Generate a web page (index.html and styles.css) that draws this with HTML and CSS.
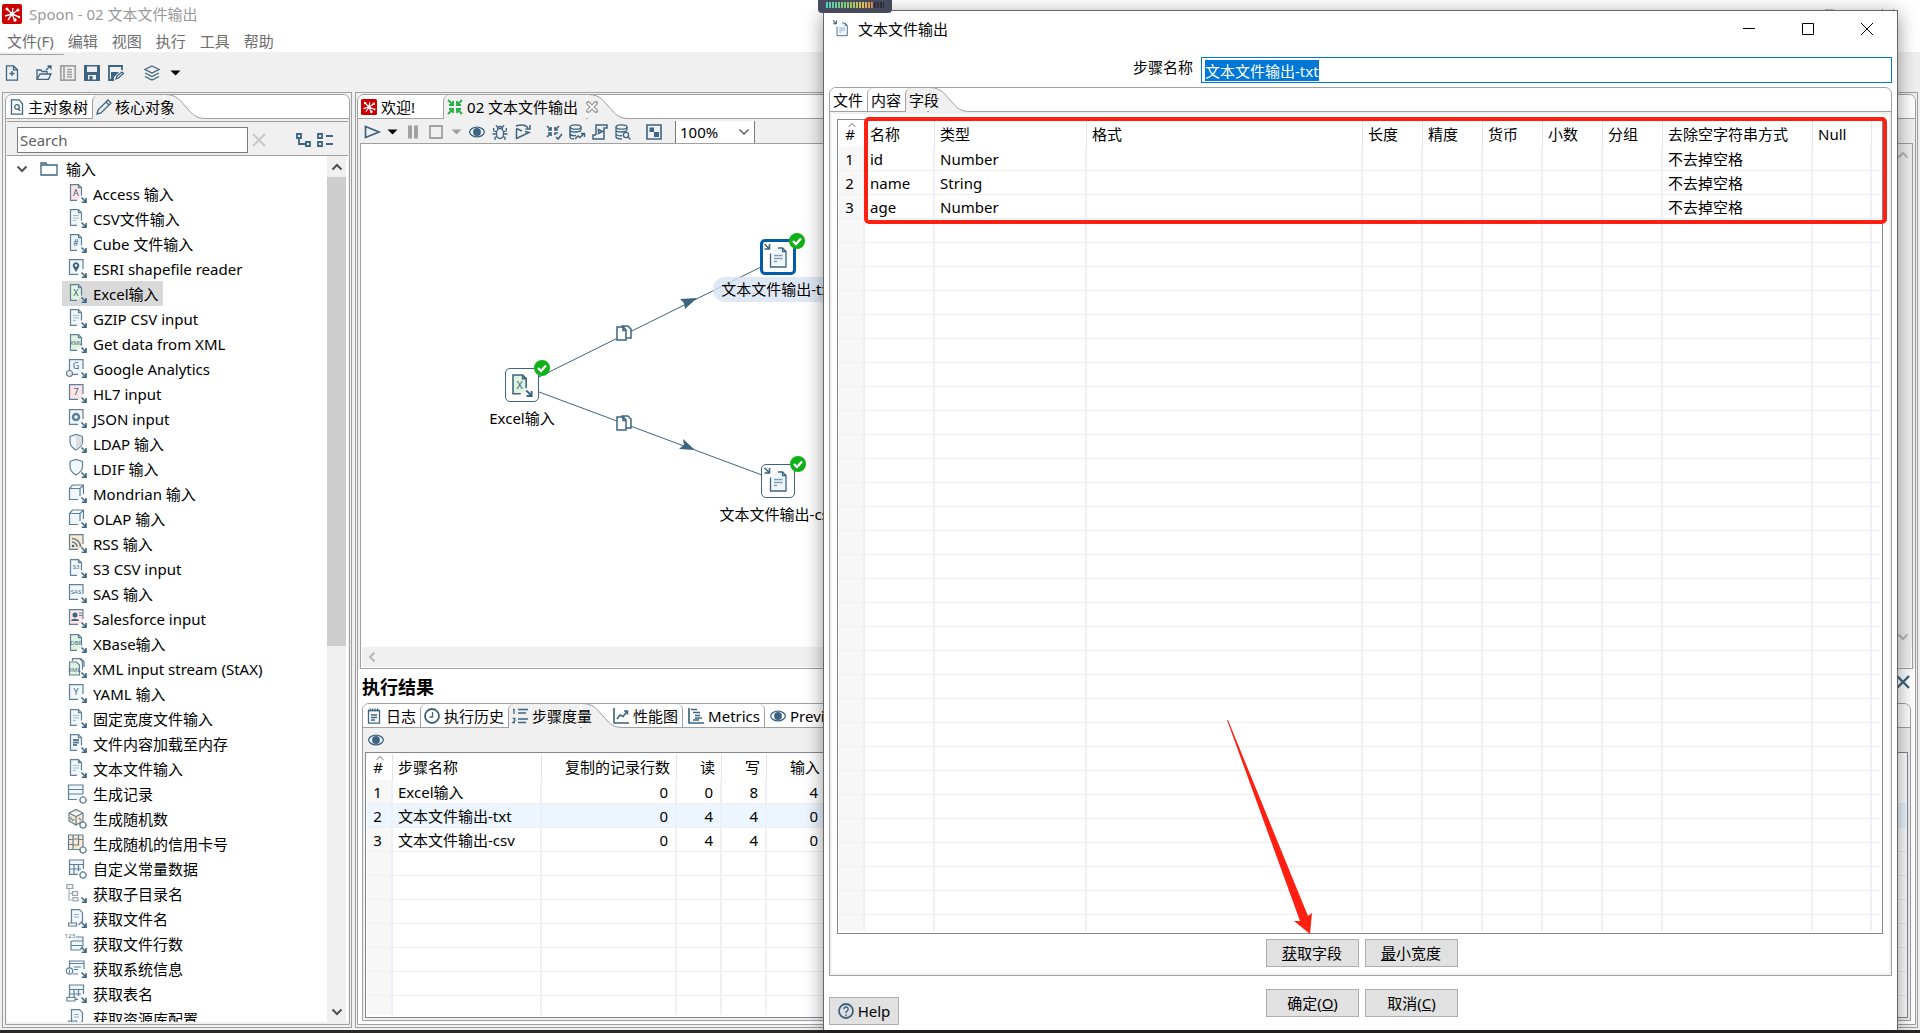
FILE: index.html
```html
<!DOCTYPE html>
<html lang="zh-CN">
<head>
<meta charset="utf-8">
<title>Spoon - 02 文本文件输出</title>
<link rel="stylesheet" href="styles.css">
</head>
<body>
<svg class="sprite" aria-hidden="true">
  <defs>
    <symbol id="logo" viewBox="0 0 20 20"><rect width="20" height="20" rx="2" fill="#c00" stroke="none"/><g stroke="#fff" stroke-width="1.4" fill="none"><path d="M10 10L5 5M10 10L16 6M10 10L3 12M10 10L6 16M10 10L13 17M10 10L17 13M10 10L11 4"/></g><g fill="#fff" stroke="none"><circle cx="10" cy="10" r="2"/><circle cx="5" cy="5" r="1.5"/><circle cx="16" cy="6" r="1.5"/><circle cx="13" cy="16" r="1.7"/><circle cx="17" cy="13" r="1.200"/></g></symbol>
    <symbol id="new" viewBox="0 0 16 16"><path d="M2.500.8h7l4 4v10.400h-11z M9.500.8v4h4 M8 6v5 M5.500 8.500h5"/></symbol>
    <symbol id="open" viewBox="0 0 16 16"><path d="M1 14V5h4l1 1.500h5V9M1 14.300h11.500L15 9H4z M10 5l4.500-4 M11.500 1H15v3.500"/></symbol>
    <symbol id="explore" viewBox="0 0 16 16"><path d="M.8.8h14.400v14.400H.8z M4 1v14 M7 4.500h5 M7 7h5 M7 9.500h5 M7 12h5" stroke-width="1.700"/></symbol>
    <symbol id="save" viewBox="0 0 16 16"><path class="solid" fill-rule="evenodd" d="M0 0h16v16H0zM3 1.500V7h10V1.500zM4 10v4.500h8V10z"/><path class="solid" d="M5.500 11h3v4h-3z"/></symbol>
    <symbol id="saveas" viewBox="0 0 16 16"><path d="M14 5V1H1v14h5" stroke-width="1.800"/><path class="solid" d="M3 7h8l-5 5H3zM3 12h3v3H3z"/><path d="M8 14l1-3 5-4 1.500 1.500-5 4.500z"/></symbol>
    <symbol id="layers" viewBox="0 0 16 16"><path d="M8 1l7 3.500L8 8 1 4.500z M1 8l7 3.500L15 8 M1 11.500L8 15l7-3.500"/></symbol>
    <symbol id="caret" viewBox="0 0 10 6"><path class="fillcur" d="M0 .5h10L5 5.500z"/></symbol>
    <symbol id="docsearch" viewBox="0 0 16 16"><path d="M2.500.8h7.500l3.500 4v10.400h-11z"/><circle cx="8" cy="8" r="2.300"/><path d="M9.500 10l1.500 2"/></symbol>
    <symbol id="pencil" viewBox="0 0 16 16"><path d="M1 15l1-4L12 1l3 3L5 14z M10 3l3 3"/></symbol>
    <symbol id="cross" viewBox="0 0 16 16"><path d="M2 2l12 12M14 2L2 14"/></symbol>
    <symbol id="expand" viewBox="0 0 16 16"><path d="M2 2h4v4H2zM11 10h4v4h-4zM4 6v6h7" stroke-width="1.800"/></symbol>
    <symbol id="collapse" viewBox="0 0 16 16"><path d="M1 2h4v4H1zM1 10h4v4H1zM9 4h7M9 12h7" stroke-width="1.800"/></symbol>
    <symbol id="folder" viewBox="0 0 18 16"><path d="M1 14V2h5l1 2h10v10z M1 4h7"/></symbol>
    <symbol id="up" viewBox="0 0 12 8"><path d="M1.500 6.500L6 2l4.500 4.500"/></symbol>
    <symbol id="down" viewBox="0 0 12 8"><path d="M1.500 1.500L6 6l4.500-4.500"/></symbol>
    <symbol id="left" viewBox="0 0 8 12"><path d="M6.500 1.500L2 6l4.500 4.500"/></symbol>
    <symbol id="run" viewBox="0 0 16 16"><path d="M1.500 2.500v11L15 8z" stroke-width="1.700"/></symbol>
    <symbol id="pause" viewBox="0 0 16 16"><path class="fillcur" d="M3 1.500h4v13H3zM9 1.500h4v13H9z"/></symbol>
    <symbol id="stop" viewBox="0 0 16 16"><path d="M2 2h12v12H2z" stroke-width="1.800"/></symbol>
    <symbol id="eye" viewBox="0 0 16 16"><ellipse cx="8" cy="8" rx="7.300" ry="4.800"/><circle class="solid" cx="8" cy="8" r="3.900"/></symbol>
    <symbol id="bug" viewBox="0 0 16 16"><ellipse cx="8" cy="9.500" rx="3.500" ry="5"/><path d="M5.500 5a2.500 2.500 0 0 1 5 0M5.500 3.500L4 1M10.500 3.500L12 1M4.500 8L2 7 1.500 4M11.500 8L14 7l.5-3M4.500 10H.5M11.500 10h4M5 12.500l-2 1V16M11 12.500l2 1V16"/></symbol>
    <symbol id="replay" viewBox="0 0 16 16"><path d="M1.500 4.500v10L14 8.500l-4-1M1.500 4.500L7 7M1 2c6-2 10-1 12 2M15 1v4h-4.500" stroke-width="1.500"/></symbol>
    <symbol id="inward" viewBox="0 0 16 16"><path d="M1 1l5 5M15 1l-5 5M1 15l5-5M15 15l-5-5M2 6h4V2M10 2v4h4M2 10h4v4M10 14v-4h4" stroke-width="1.900"/></symbol>
    <symbol id="verify" viewBox="0 0 16 16"><path d="M1 2l4 4M13 2L9 6M1 13l4-4M2 6h3V3M9 3v3h3M2 9h3v3M9 11V9h3M10 13l2 2 4-5" stroke-width="1.700"/></symbol>
    <symbol id="impact" viewBox="0 0 16 16"><ellipse cx="6.500" cy="3" rx="5.500" ry="2.200"/><path d="M1 3v10c0 1 2 2 4 2M12 3v3M1 6.500c1 2 9 2 11 0M1 10c1 1.500 4 2 6 1.500M6 15l3-3 2 1.500 4-4M12 9.500h3.500V13" stroke-width="1.500"/></symbol>
    <symbol id="sql" viewBox="0 0 16 16"><path d="M4 11V1h11v3h-3v11H1v-4h3M6.500 5.500v4l4-2z" stroke-width="1.500"/></symbol>
    <symbol id="dbexplore" viewBox="0 0 16 16"><ellipse cx="6.500" cy="3" rx="5.500" ry="2.200"/><path d="M1 3v10c0 1 3 2 6 2M12 3v3M1 6.500c1 2 9 2 11 0M1 10c1 1.500 4 2 6 1.500M13 13l2.500 2.500"/><circle cx="11" cy="11" r="2.600"/></symbol>
    <symbol id="grid" viewBox="0 0 16 16"><path d="M1 1h14v14H1z" stroke-width="1.600"/><path class="solid" d="M3.500 3.500h4.500v4.500H3.500zM8 8h5v5H8z"/></symbol>
    <symbol id="tabx" viewBox="0 0 14 14"><path d="M1 1h3l3 3.500L10 1h3v3L9.500 7l3.500 3v3h-3L7 9.500 4 13H1v-3l3.500-3L1 4z" stroke-width="1"/></symbol>
    <symbol id="log" viewBox="0 0 16 16"><path d="M2.500 2.500h11v12.700h-11zM4 .5v3M6.500.5v3M9 .5v3M11.500.5v3M5 7h6M5 9.500h6M5 12h4"/></symbol>
    <symbol id="clock" viewBox="0 0 16 16"><circle cx="8" cy="8" r="7" stroke-width="1.800"/><path d="M8.500 4v5H5.500"/></symbol>
    <symbol id="steps" viewBox="0 0 16 16"><path d="M1 1.500h1V6M.8 10.500h2v2l-1.800 2h2M6 1.500h10M6 5h8M6 11h10M6 14.500h8"/></symbol>
    <symbol id="chart" viewBox="0 0 16 16"><path d="M1 0v15h15M4 11l3-4 3 1.500 4-5M11 3h3.500v3.500" stroke-width="1.600"/></symbol>
    <symbol id="metrics" viewBox="0 0 16 16"><path d="M1 0v15h15M3 1.500h6M5 4.500h7M7 7.500h5M7 10h7M5 12h6" stroke-width="1.700"/></symbol>
    <symbol id="help" viewBox="0 0 16 16"><circle cx="8" cy="8" r="7" stroke-width="1.800"/><path d="M5.800 6.200a2.200 2.200 0 1 1 3.200 2c-.8.500-1 .8-1 1.800M8 11.200v1.500" stroke-width="1.500"/></symbol>
    <symbol id="arr" viewBox="0 0 21 21"><path d="M15.500 14.500l4 4M20 15v4.200h-4.200" stroke="#3d6480" stroke-width="1.600"/></symbol>
    <symbol id="gear" viewBox="0 0 21 21"><circle cx="17" cy="17" r="3" fill="#fff"/><path d="M17 13v1M17 20v1M13 17h1M20 17h1"/></symbol>
    <symbol id="doc" viewBox="0 0 21 21"><path class="tint bare" d="M4.500 1.700h8l3 3V13l-4 4h-7z"/><path d="M15.500 12.500V4.700l-3-3h-8v15.600h6.500M12.500 1.700v3h3"/></symbol>
    <symbol id="box" viewBox="0 0 21 21"><path class="tint bare" d="M3.500 1.700h13.500V13l-4 4H3.500z"/><path d="M17 11V1.700H3.500v14.600H12"/></symbol>
    <symbol id="lines" viewBox="0 0 21 21"><path d="M7 7.500h6M7 10h6M7 12.500h3" opacity=".5"/></symbol>
    <symbol id="boldlines" viewBox="0 0 21 21"><path d="M7 7h6M7 9.500h6M7 12h4" stroke-width="2"/></symbol>
    <symbol id="shield" viewBox="0 0 21 21"><path class="tint" d="M4 3.500l6-2 6.500 2v5c0 4-3 6.500-6.500 8.500C6.500 15 4 12.500 4 8.500z"/></symbol>
    <symbol id="cube" viewBox="0 0 21 21"><path class="tint bare" d="M3.500 5.500l3-3.500h11v9l-4 5.500h-10z"/><path d="M17.500 11V2h-11l-3 3.500v11H12M3.500 5.500h10.500V13M14 5.500L17.500 2"/></symbol>
    <symbol id="tables" viewBox="0 0 21 21"><path class="tint bare" d="M3.500 2h14v9l-4 5h-10z"/><path d="M17.500 11V2h-14v14.300H12M3.500 6.500h14M8 6.500V16M12.500 6.500V13M3.500 11H15"/></symbol>
    <symbol id="outfile" viewBox="0 0 24 24"><path class="tint bare" d="M4.500 7.500V22H20V6.500L16.500 3h-6z"/><path d="M4.500 8.500V22H20V6.500h-3.500V3H12M16.500 3L20 6.500"/><path d="M8 10.500h8.500M8 13.500h8.500M8 16.500h3" opacity=".6"/><path d="M-1.500-1l4.500 4.500M3.500-1v5h-5" stroke-width="1.600"/></symbol>
    <symbol id="copies" viewBox="0 0 16 16"><path fill="#fff" stroke-width="1.500" d="M6 1h6l3 3v9H6z"/><path fill="#fff" stroke-width="1.500" d="M1 2h6.500L10 5v10H1z M7 2v3.500h3"/></symbol>
    <symbol id="ok" viewBox="0 0 16 16"><circle cx="8" cy="8" r="8" fill="#10b018" stroke="none"/><path d="M4 8l3 3 5-5.500" stroke="#fff" stroke-width="2.400"/></symbol>
    <symbol id="swoosh" viewBox="0 0 40 24"><path fill="#f0f0f0" stroke="none" d="M0 0C13 0 16 7 21 12s8 11 19 11v1H0z"/><path stroke="#a0a0a0" stroke-width="1" d="M0-.5C13-.5 16 7 21 12s8 11.500 19 11.500"/></symbol>
  </defs>
</svg>

<div class="app">
  <header class="titlebar">
    <svg class="i20"><use href="#logo"/></svg>
    <h1>Spoon - 02 文本文件输出</h1>
    <svg class="wincontrols" viewBox="0 0 72 14"><path d="M3 11V3h9v9M1 14V5h9v9M60 2l12 12M72 2L60 14"/></svg>
  </header>
  <nav class="menubar">
    <button>文件(F)</button><button>编辑</button><button>视图</button><button>执行</button><button>工具</button><button>帮助</button>
  </nav>
  <div class="toolbar">
    <button class="tool" aria-label="新建"><svg class="i16"><use href="#new"/></svg></button>
    <button class="tool gap-s" aria-label="打开"><svg class="i16"><use href="#open"/></svg></button>
    <button class="tool off" aria-label="浏览"><svg class="i16"><use href="#explore"/></svg></button>
    <button class="tool" aria-label="保存"><svg class="i16"><use href="#save"/></svg></button>
    <button class="tool" aria-label="另存为"><svg class="i16"><use href="#saveas"/></svg></button>
    <button class="tool gap-m" aria-label="视图"><svg class="i16"><use href="#layers"/></svg></button>
    <button class="tool black more" aria-label="更多"><svg class="icaret"><use href="#caret"/></svg></button>
  </div>

  <div class="workspace">
    <aside class="pane side"><div class="folder">
      <div class="tabs">
        <button class="tab"><svg class="i16"><use href="#docsearch"/></svg>主对象树</button>
        <button class="tab active"><svg class="i16"><use href="#pencil"/></svg>核心对象</button>
        <svg class="swoosh"><use href="#swoosh"/></svg>
      </div>
      <div class="sidebody">
        <div class="searchrow">
          <input type="text" class="search" placeholder="Search" aria-label="Search">
          <button class="tool faint" aria-label="清除"><svg class="i16"><use href="#cross"/></svg></button>
          <span class="spacer"></span>
          <button class="tool" aria-label="展开"><svg class="i16"><use href="#expand"/></svg></button>
          <button class="tool" aria-label="折叠"><svg class="i16"><use href="#collapse"/></svg></button>
        </div>
        <div class="treebox">
          <ul class="tree">
            <li class="root"><svg class="ichev"><use href="#down"/></svg><svg class="ifolder"><use href="#folder"/></svg>输入</li>
            <li><svg class="pink"><use href="#doc"/><text x="10" y="13">A</text><use href="#arr"/></svg>Access 输入</li>
            <li><svg><use href="#doc"/><use href="#lines"/><use href="#arr"/></svg>CSV文件输入</li>
            <li><svg><use href="#doc"/><text x="10" y="13">#</text><use href="#arr"/></svg>Cube 文件输入</li>
            <li><svg><use href="#box"/><path class="solid" d="M10 14L7 9a3.300 3.300 0 1 1 6 0z"/><circle cx="10" cy="7.500" r="1.200" fill="#fff" stroke="none"/><use href="#arr"/></svg>ESRI shapefile reader</li>
            <li class="selected"><svg class="green"><use href="#doc"/><text x="10" y="13">X</text><use href="#arr"/></svg>Excel输入</li>
            <li><svg><use href="#doc"/><use href="#lines"/><use href="#arr"/></svg>GZIP CSV input</li>
            <li><svg class="green"><use href="#doc"/><text class="tiny" x="10" y="12">XML</text><use href="#arr"/></svg>Get data from XML</li>
            <li><svg><use href="#box"/><text x="10" y="11">G</text><circle cx="3.500" cy="15.500" r="3" fill="#fde3e3"/><use href="#arr"/></svg>Google Analytics</li>
            <li><svg class="pink"><use href="#box"/><text x="10" y="12">7</text><use href="#arr"/></svg>HL7 input</li>
            <li><svg><use href="#box"/><circle cx="10" cy="9" r="3" stroke-width="2.500"/><use href="#arr"/></svg>JSON input</li>
            <li><svg><use href="#shield"/><path d="M10 2l6 2v5c0 3-3 6-6 7z" fill="#ddd" stroke="none"/><use href="#arr"/></svg>LDAP 输入</li>
            <li><svg><use href="#shield"/><use href="#arr"/></svg>LDIF 输入</li>
            <li><svg><use href="#cube"/><use href="#arr"/></svg>Mondrian 输入</li>
            <li><svg><use href="#cube"/><use href="#arr"/></svg>OLAP 输入</li>
            <li><svg class="orange"><use href="#box"/><path d="M6 9a5 5 0 0 1 5 5M6 5.500A8.500 8.500 0 0 1 14.500 14" stroke-width="1.600"/><circle class="solid" cx="7" cy="13" r="1.300"/><use href="#arr"/></svg>RSS 输入</li>
            <li><svg><use href="#doc"/><text class="tiny" x="10" y="11">S3</text><use href="#arr"/></svg>S3 CSV input</li>
            <li><svg><use href="#box"/><text class="tiny" x="10" y="11">SAS</text><use href="#arr"/></svg>SAS 输入</li>
            <li><svg class="pink"><use href="#box"/><circle class="solid" cx="9" cy="7" r="2.500"/><path class="solid" d="M5 13c0-3 8-3 8 0z"/><path d="M13 5h3M13 7.500h3"/><use href="#arr"/></svg>Salesforce input</li>
            <li><svg class="green"><use href="#doc"/><text class="tiny" x="10" y="12">DBF</text><use href="#arr"/></svg>XBase输入</li>
            <li><svg class="green"><path d="M6.500 3V.7h7l3 3v8M9 .7h6l3 3V9"/><path class="tint" d="M3.500 4h7l3 3v10h-10z"/><text class="tiny" x="8.500" y="14">XML</text><use href="#arr"/></svg>XML input stream (StAX)</li>
            <li><svg><use href="#box"/><text x="10" y="12">Y</text><use href="#arr"/></svg>YAML 输入</li>
            <li><svg><use href="#doc"/><use href="#lines"/><use href="#arr"/></svg>固定宽度文件输入</li>
            <li><svg><use href="#doc"/><use href="#boldlines"/><use href="#arr"/></svg>文件内容加载至内存</li>
            <li><svg><use href="#doc"/><use href="#lines"/><use href="#arr"/></svg>文本文件输入</li>
            <li><svg><path class="tint bare" d="M2.500 2h14.500v9l-5 5.500H2.500z"/><path d="M17 11V2H2.500v14.500H11M2.500 6.500H17M2.500 11H17"/><use href="#gear"/></svg>生成记录</li>
            <li><svg class="orange"><path class="tint" d="M3 5l7-3.500L17 5v8l-7 4-7-4zM3 5l7 3.500L17 5M10 8.500V17"/><path d="M5 9v3M8 11l-2 2M13 10l2 2" /><use href="#gear"/></svg>生成随机数</li>
            <li><svg class="orange"><path class="tint" d="M2.500 2H17v14.500H2.500zM7 2v4M12.500 2v4M2.500 6.500H7M12.500 6.500H17M2.500 11.500H7M7 6h5.500v6H7zM7 12v4.500"/><use href="#gear"/></svg>生成随机的信用卡号</li>
            <li><svg><use href="#tables"/><use href="#gear"/></svg>自定义常量数据</li>
            <li><svg class="orange"><path class="tint" d="M.8 1.500h6v4h-6zM6.500 8.500h5v4h-5zM7 14.500h5v3.500H7z" opacity=".7"/><path d="M3 6v11h3M3 10.500h3" opacity=".6"/><use href="#arr"/></svg>获取子目录名</li>
            <li><svg><path class="tint" d="M5.500 15V1.700h8l3 3V13l-4 4M2.500 15h8v3h-8z"/><path d="M8 6.500h5M8 9h5" opacity=".6"/><use href="#arr"/></svg>获取文件名</li>
            <li><svg><text class="tiny" x="4" y="5">123</text><path class="tint" d="M10 4h7v9l-3 4H5V8M5 8h12M5 12.500h11"/><use href="#arr"/></svg>获取文件行数</li>
            <li><svg><path class="tint bare" d="M3.500 3H18v8l-5 5H3.500z"/><path d="M3.500 12V3H18v8M3.500 5.500H18M8 9h7M8 11.500h4M7 16h5"/><circle cx="3.500" cy="13" r="3.200" fill="#fff"/><path d="M3.500 11.500v3.500"/><use href="#arr"/></svg>获取系统信息</li>
            <li><svg><use href="#tables"/><path d="M1 14.500h8v3.500H1z" fill="#fff"/><use href="#arr"/></svg>获取表名</li>
            <li><svg><path class="tint" d="M5.500 15V1.700h8l3 3V13l-4 4M2.500 13h8v3h-8z"/><path d="M8 6.500h5M8 9h5" opacity=".6"/><use href="#arr"/></svg>获取资源库配置</li>
          </ul>
          <div class="vscroll"><svg class="ichev"><use href="#up"/></svg><div class="thumb"></div><svg class="ichev"><use href="#down"/></svg></div>
        </div>
      </div>
    </div></aside>

    <main class="pane editor"><div class="folder">
      <div class="tabs">
        <button class="tab wide"><svg class="i16"><use href="#logo"/></svg>欢迎!</button>
        <button class="tab active"><svg class="i16 lime"><use href="#inward"/></svg>02 文本文件输出<svg class="itabx"><use href="#tabx"/></svg></button>
        <svg class="swoosh"><use href="#swoosh"/></svg>
      </div>
      <div class="runbar">
        <button class="tool" aria-label="运行"><svg class="i16"><use href="#run"/></svg></button>
        <button class="tool black" aria-label="运行选项"><svg class="icaret"><use href="#caret"/></svg></button>
        <button class="tool off" aria-label="暂停"><svg class="i16"><use href="#pause"/></svg></button>
        <button class="tool off" aria-label="停止"><svg class="i16"><use href="#stop"/></svg></button>
        <button class="tool off" aria-label="停止选项"><svg class="icaret"><use href="#caret"/></svg></button>
        <button class="tool" aria-label="预览"><svg class="i16"><use href="#eye"/></svg></button>
        <button class="tool" aria-label="调试"><svg class="i16"><use href="#bug"/></svg></button>
        <button class="tool" aria-label="重放"><svg class="i16"><use href="#replay"/></svg></button>
        <button class="tool gap-s" aria-label="校验"><svg class="i16"><use href="#verify"/></svg></button>
        <button class="tool" aria-label="影响分析"><svg class="i16"><use href="#impact"/></svg></button>
        <button class="tool" aria-label="SQL"><svg class="i16"><use href="#sql"/></svg></button>
        <button class="tool" aria-label="浏览数据库"><svg class="i16"><use href="#dbexplore"/></svg></button>
        <button class="tool gap-s" aria-label="显示结果"><svg class="i16"><use href="#grid"/></svg></button>
        <span class="zoombox"><select aria-label="缩放"><option>100%</option></select><svg class="ichev"><use href="#down"/></svg></span>
      </div>
      <div class="canvasframe">
        <div class="canvas">
          <svg class="hops" viewBox="0 0 480 400">
            <path d="M178 233L400 123M178 248L401 331"/>
            <path class="solid" d="M319 155l17-1-12 11-1-6zM322 295l12 11-16-1 5-4z"/>
            <use href="#copies" x="255" y="181" width="16" height="16"/>
            <use href="#copies" x="255" y="271" width="16" height="16"/>
          </svg>
          <div class="node excel"><span class="iconbox"><svg class="green" viewBox="2 0 20 20"><use href="#doc" width="21" height="21"/><text x="10" y="13">X</text><use href="#arr" width="21" height="21"/></svg><svg class="ok"><use href="#ok"/></svg></span><span class="label">Excel输入</span></div>
          <div class="node txt current"><span class="iconbox"><svg><use href="#outfile"/></svg><svg class="ok"><use href="#ok"/></svg></span><span class="label">文本文件输出-txt</span></div>
          <div class="node csv"><span class="iconbox"><svg><use href="#outfile"/></svg><svg class="ok"><use href="#ok"/></svg></span><span class="label">文本文件输出-csv</span></div>
        </div>
        <div class="vscroll pale"><svg class="ichev"><use href="#up"/></svg><svg class="ichev"><use href="#down"/></svg></div>
        <div class="hscroll"><svg class="ileft"><use href="#left"/></svg></div>
      </div>
      <section class="results">
        <div class="resulthead"><h2>执行结果</h2><button class="tool" aria-label="关闭"><svg class="i16 thick"><use href="#cross"/></svg></button></div>
        <div class="folder">
          <div class="tabs">
            <button class="tab"><svg class="i16"><use href="#log"/></svg>日志</button>
            <button class="tab"><svg class="i16"><use href="#clock"/></svg>执行历史</button>
            <button class="tab active"><svg class="i16"><use href="#steps"/></svg>步骤度量</button>
            <svg class="swoosh"><use href="#swoosh"/></svg>
            <button class="tab after first"><svg class="i16"><use href="#chart"/></svg>性能图</button>
            <button class="tab after"><svg class="i16"><use href="#metrics"/></svg>Metrics</button>
            <button class="tab after"><svg class="i16"><use href="#eye"/></svg>Preview data</button>
          </div>
          <div class="resultbody">
            <div class="minibar"><button class="tool" aria-label="预览"><svg class="i16"><use href="#eye"/></svg></button></div>
            <div class="gridbox">
              <table class="grid metrics">
                <colgroup><col class="w26"><col class="w149"><col class="w135"><col class="w45"><col class="w45"><col class="w60"><col></colgroup>
                <thead><tr><th><svg class="isort"><use href="#up"/></svg>#</th><th>步骤名称</th><th class="n">复制的记录行数</th><th class="n">读</th><th class="n">写</th><th class="n">输入</th><th></th></tr></thead>
                <tbody>
                  <tr><td>1</td><td>Excel输入</td><td class="n">0</td><td class="n">0</td><td class="n">8</td><td class="n">4</td><td></td></tr>
                  <tr class="alt"><td>2</td><td>文本文件输出-txt</td><td class="n">0</td><td class="n">4</td><td class="n">4</td><td class="n">0</td><td></td></tr>
                  <tr><td>3</td><td>文本文件输出-csv</td><td class="n">0</td><td class="n">4</td><td class="n">4</td><td class="n">0</td><td></td></tr>
                  <tr class="rest"><td></td><td></td><td></td><td></td><td></td><td></td><td></td></tr>
                </tbody>
              </table>
            </div>
          </div>
        </div>
      </section>
    </div></main>
  </div>
  <div class="desktopedge"></div>
</div>

<div class="dialog" role="dialog" aria-labelledby="dlgtitle">
  <div class="dlghead">
    <svg class="i16"><use href="#outfile"/></svg>
    <h2 id="dlgtitle">文本文件输出</h2>
    <span class="spacer"></span>
    <button class="tool black" aria-label="最小化"><svg class="iwin" viewBox="0 0 12 12"><path d="M0 5.500h12"/></svg></button>
    <button class="tool black" aria-label="最大化"><svg class="iwin" viewBox="0 0 12 12"><path d="M.5.500h11v11H.5z"/></svg></button>
    <button class="tool black" aria-label="关闭"><svg class="iwin" viewBox="0 0 12 12"><path d="M0 0l12 12M12 0L0 12"/></svg></button>
  </div>
  <div class="namerow">
    <label for="stepname">步骤名称</label>
    <input id="stepname" type="text" value="文本文件输出-txt">
  </div>
  <div class="folder">
    <div class="tabs">
      <button class="tab">文件</button>
      <button class="tab">内容</button>
      <button class="tab active">字段</button>
      <svg class="swoosh"><use href="#swoosh"/></svg>
    </div>
    <div class="dlgbody">
      <div class="gridbox">
        <table class="grid fields">
          <colgroup><col class="w26"><col class="w70"><col class="w152"><col class="w276"><col class="w60"><col class="w60"><col class="w60"><col class="w60"><col class="w60"><col class="w150"><col class="w59"><col></colgroup>
          <thead><tr><th><svg class="isort"><use href="#up"/></svg>#</th><th>名称</th><th>类型</th><th>格式</th><th>长度</th><th>精度</th><th>货币</th><th>小数</th><th>分组</th><th>去除空字符串方式</th><th>Null</th><th></th></tr></thead>
          <tbody>
            <tr><td>1</td><td>id</td><td>Number</td><td></td><td></td><td></td><td></td><td></td><td></td><td>不去掉空格</td><td></td><td></td></tr>
            <tr><td>2</td><td>name</td><td>String</td><td></td><td></td><td></td><td></td><td></td><td></td><td>不去掉空格</td><td></td><td></td></tr>
            <tr><td>3</td><td>age</td><td>Number</td><td></td><td></td><td></td><td></td><td></td><td></td><td>不去掉空格</td><td></td><td></td></tr>
            <tr class="rest"><td></td><td></td><td></td><td></td><td></td><td></td><td></td><td></td><td></td><td></td><td></td><td></td></tr>
          </tbody>
        </table>
      </div>
      <div class="btnrow"><button class="btn"><u>获</u>取字段</button><button class="btn"><u>最</u>小宽度</button></div>
    </div>
  </div>
  <div class="dlgfoot">
    <button class="btn help"><svg class="i16"><use href="#help"/></svg>Help</button>
    <div class="btnrow"><button class="btn">确定(<u>O</u>)</button><button class="btn">取消(<u>C</u>)</button></div>
  </div>
  <div class="markbox"></div>
  <svg class="markarrow" viewBox="0 0 86 214"><path d="M0 0h1l80 196 4-3-2 21-16-13 6 0z"/></svg>
</div>
<div class="meter"><span></span></div>
<script src="main.js"></script>
</body>
</html>
```
FILE: styles.css
```css
:root {
  --ink: #3d6480;
  --line: #a0a0a0;
  --face: #f0f0f0;
}
* { box-sizing: border-box; }
body {
  margin: 0;
  overflow: hidden;
  background: #fff;
  color: #000;
  font: 15px/20px "Noto Sans", "Noto Sans CJK SC", sans-serif;
}
button, input, select { font: inherit; color: inherit; }
button { padding: 0; border: 0; background: none; white-space: nowrap; }
h1, h2, ul { margin: 0; padding: 0; font-size: 15px; font-weight: 400; }
svg { display: block; flex: none; fill: none; stroke: var(--ink); stroke-width: 1.3; overflow: visible; }
symbol { overflow: visible; }
.sprite { position: absolute; width: 0; height: 0; }
.solid { fill: var(--ink); stroke: none; }
.fillcur { fill: currentColor; stroke: none; }
.tint { fill: var(--tint, #f0f7fd); }
.bare { stroke: none; }
.spacer { flex: 1; }

.i16 { width: 16px; height: 16px; }
.i20 { width: 20px; height: 20px; }
.icaret { width: 11px; height: 6px; }
.ichev { width: 12px; height: 8px; stroke: #505050; stroke-width: 2; }
.ifolder { width: 18px; height: 16px; }
.itabx { width: 12px; height: 12px; stroke: #606060; }
.iwin { width: 12px; height: 12px; stroke: #000; stroke-width: 1; }
.ileft { width: 8px; height: 12px; stroke: #b8b8b8; stroke-width: 2; }
.lime { stroke: #2bb04b; }
.thick { stroke-width: 2.4; }
.off { color: #a0a0a0; }
.off svg { stroke: #a0a0a0; }
.black { color: #000; }
.faint svg { stroke: #c8c8c8; stroke-width: 2; }

/* main window */
.app { display: flex; flex-direction: column; height: 100vh; background: var(--face); }
.titlebar { display: flex; align-items: center; gap: 7px; height: 30px; padding: 0 26px 2px 2px; background: #fff; color: #999; }
.wincontrols { width: 72px; height: 14px; margin-left: auto; stroke: #888; stroke-width: 1; }
.menubar { display: flex; gap: 14px; height: 22px; padding-left: 7px; background: #fff; color: #6d6d6d; }
.toolbar { display: flex; align-items: center; gap: 8px; height: 40px; padding: 2px 4px 0; background: linear-gradient(var(--line), var(--line)) 0 2px / 64px 1px no-repeat; }
.toolbar .more { margin-left: 2px; }
.gap-s { margin-left: 8px; }
.gap-m { margin-left: 12px; }
.workspace { display: flex; gap: 3px; flex: 1; min-height: 0; padding: 0 2px 2px; }
.desktopedge { height: 3px; background: #2c2627; }

.pane { display: flex; flex: 1; min-width: 0; padding: 1px 1px 2px 2px; border: 1px solid var(--line); }
.pane.side { flex: none; width: 350px; }
.pane.editor { padding-left: 1px; }
.folder { display: flex; flex: 1; flex-direction: column; min-width: 0; min-height: 0; border: 1px solid var(--line); border-radius: 7px 7px 0 0; background: var(--face); }
.tabs { display: flex; flex: none; height: 24px; border-bottom: 1px solid var(--line); border-radius: 6px 6px 0 0; background: #fff; }
.tab { display: flex; align-items: center; gap: 3px; height: 23px; padding: 0 4px 0 3px; }
.editor .tab { gap: 4px; }
.tab + .tab { border-left: 1px solid var(--line); border-top-left-radius: 6px; }
.tab.wide { padding-right: 28px; }
.tab.active { position: relative; z-index: 1; height: 24px; padding-right: 0; background: linear-gradient(90deg, var(--face) calc(100% - 12px), transparent 0); }
.swoosh { width: 40px; height: 24px; margin-left: -10px; }
.tab.after { padding-left: 5px; border-left: 0; border-right: 1px solid var(--line); border-radius: 0 6px 0 0; }
.tab.after.first { margin-left: -14px; }
.tab .itabx { margin-left: 4px; }
.tool { display: flex; align-items: center; justify-content: center; }

/* object tree */
.sidebody { display: flex; flex: 1; flex-direction: column; min-height: 0; padding: 2px 1px; }
.searchrow { display: flex; align-items: center; gap: 6px; height: 35px; padding: 2px 15px 0 10px; border: solid var(--line); border-width: 1px 0; }
.search { width: 231px; height: 26px; margin-right: -3px; padding: 0 2px; border: 1px solid #7a7a7a; background: #fff; }
.search::placeholder { color: #606060; opacity: 1; }
.treebox { display: flex; flex: 1; min-height: 0; background: #fff; }
.tree { flex: 1; min-width: 0; overflow: hidden; list-style: none; }
.tree li { display: flex; align-items: center; gap: 6px; width: max-content; height: 25px; margin-left: 55px; padding: 0 4px; white-space: nowrap; }
.tree li > svg { width: 21px; height: 21px; }
.tree li:not(.root) > svg { stroke: #5f8098; stroke-width: 1.2; }
.tree .root { gap: 8px; margin-left: 5px; padding-top: 1px; }
.tree .root .ichev { width: 12px; height: 8px; margin-right: 4px; }
.tree .root .ifolder { width: 18px; height: 16px; }
.tree .selected { background: #d9d9d9; }
svg text { fill: var(--ink); stroke: none; font: 9px "Noto Sans", sans-serif; text-anchor: middle; }
svg text.tiny { font-size: 6px; }
.green { --tint: #dff3df; }
.pink { --tint: #fde4e6; }
.orange { --tint: #fde9cc; }
.vscroll { display: flex; flex-direction: column; align-items: center; width: 19px; padding: 7px 0 6px; background: var(--face); }
.treebox .vscroll { margin-right: 2px; }
.vscroll .thumb { width: 100%; height: 55%; margin: 6px 0 auto; background: #cdcdcd; }
.vscroll.pale { justify-content: space-between; }
.vscroll.pale .ichev { stroke: #b8b8b8; }

/* transformation editor */
.runbar { display: flex; align-items: center; gap: 7px; flex: none; height: 24px; padding: 1px 0 0 6px; }
.zoombox { display: flex; align-items: center; width: 80px; height: 22px; margin-left: 6px; padding-right: 4px; border: solid #7a7a7a; border-width: 0 1px; background: #fff; }
.zoombox select { flex: 1; min-width: 0; padding: 0 4px; border: 0; background: none; appearance: none; }
.zoombox .ichev { stroke-width: 1.3; }
.canvasframe { display: grid; grid-template: 1fr 21px / 1fr 19px; flex: 1; min-height: 0; margin: 0 2px; border: 1px solid var(--line); background: #fff; }
.canvas { position: relative; min-height: 0; overflow: hidden; }
.hscroll { display: flex; align-items: center; grid-column: 1 / 3; margin: 0 1px 1px; padding-left: 6px; background: var(--face); }
.hops { position: absolute; left: 0; top: 0; width: 480px; height: 400px; stroke-width: 1; }
.node { position: absolute; display: flex; flex-direction: column; align-items: center; gap: 4px; width: 140px; transform: translateX(-50%); }
.node.excel { left: 161px; top: 224px; }
.node.txt { left: 417px; top: 95px; }
.node.csv { left: 417px; top: 320px; }
.iconbox { position: relative; display: flex; align-items: center; justify-content: center; width: 34px; height: 34px; border: 1px solid var(--ink); border-radius: 5px; background: #fff; }
.iconbox > svg { width: 24px; height: 24px; }
.iconbox .ok { position: absolute; top: -9px; right: -12px; width: 16px; height: 16px; }
.current .iconbox { width: 36px; height: 36px; border: 3px solid #005daa; }
.current { gap: 2px; }
.label { padding: 2px 8px 3px; border-radius: 12px; white-space: nowrap; }
.current .label { background: rgba(215, 228, 242, .8); }

/* execution results */
.results { display: flex; flex: none; flex-direction: column; height: 355px; padding: 0 4px 3px; background: #fff; }
.resulthead { display: flex; align-items: flex-start; justify-content: space-between; height: 34px; padding-top: 5px; }
.resulthead h2 { margin-top: 3px; font-size: 18px; font-weight: 700; }
.resultbody { display: flex; flex: 1; flex-direction: column; min-height: 0; padding: 0 2px 2px; }
.minibar { display: flex; align-items: center; height: 24px; padding-left: 3px; }
.gridbox { display: flex; flex: 1; min-height: 0; padding: 1px 1px 2px; border: 1px solid #828790; background: #fff; }
.grid { flex: 1; width: 100%; height: 100%; table-layout: fixed; border-collapse: separate; border-spacing: 0; }
.grid th { position: relative; height: 26px; padding: 0 6px 1px 5px; border-right: 1px solid #e5e5e5; font-weight: 400; text-align: left; white-space: nowrap; }
.grid td { height: 24px; padding: 0 7px 0 5px; border-right: 2px solid #edf1f7; border-bottom: 1px solid #efefef; white-space: nowrap; }
.grid th:last-child, .grid td:last-child { border-right: 0; }
.grid th:first-child, .grid td:first-child { padding: 0 3px 0 0; text-align: center; }
.grid td:first-child { background-color: #f7f7f7; }
.grid .alt td { background-color: #edf6ff; }
.grid .n { text-align: right; }
.grid .rest td { height: auto; border-bottom: 0; background-image: repeating-linear-gradient(transparent 0 23px, #efefef 23px 24px); }
.isort { position: absolute; top: 1px; left: 8px; width: 10px; height: 6px; stroke: #606060; }
.w26 { width: 26px; } .w45 { width: 45px; } .w59 { width: 59px; } .w60 { width: 60px; } .w70 { width: 70px; }
.w135 { width: 135px; } .w149 { width: 149px; } .w150 { width: 150px; } .w152 { width: 152px; } .w276 { width: 276px; }

/* step dialog */
.dialog { position: absolute; inset: 10px 22px 3px 823px; display: flex; flex-direction: column; padding: 0 5px; border: 1px solid #666; border-bottom: 0; background: #fff; box-shadow: 0 4px 18px rgba(0, 0, 0, .42); }
.dlghead { display: flex; align-items: center; gap: 8px; height: 36px; padding: 0 19px 0 5px; }
.dlghead .tool { width: 12px; height: 36px; margin-left: 39px; }
.namerow { display: flex; align-items: flex-end; gap: 8px; height: 36px; }
.namerow label { width: 364px; margin-bottom: 6px; text-align: right; }
.namerow input { flex: 1; height: 26px; padding: 0 3px; border: 1px solid #0078d7; outline: 0; background: #fff; }
.namerow input::selection { background: #0078d7; color: #fff; }
.dialog > .folder { margin-top: 4px; }
.dlgbody { display: flex; flex: 1; flex-direction: column; gap: 5px; min-height: 0; padding: 5px 6px 6px 5px; border: 2px solid var(--face); background: #fff; }
.btnrow { display: flex; justify-content: center; gap: 6px; padding-left: 3px; }
.btn { width: 93px; height: 28px; border: 1px solid #adadad; background: #e1e1e1; }
.dlgfoot { display: grid; grid-template-columns: 70px 1fr 70px; align-items: start; height: 54px; padding: 13px 0 5px; }
.btn.help { display: flex; align-items: center; justify-content: center; align-self: end; gap: 4px; width: 70px; }
.markbox { position: absolute; top: 106px; left: 40px; right: 10px; height: 107px; border: 4px solid #ff2012; border-radius: 5px; }
.markarrow { position: absolute; left: 403px; top: 709px; width: 86px; height: 214px; fill: #ff2012; stroke: none; }

/* floating level meter */
.meter { position: absolute; top: 0; left: 818px; width: 74px; height: 13px; padding: 2px 8px; border-radius: 0 0 4px 4px; background: #474a5c; }
.meter span { display: block; height: 6px; background: repeating-linear-gradient(90deg, transparent 0 2px, #474a5c 2px 3px), linear-gradient(90deg, #4fd0c0, #9cc860 45%, #e0c050 65%, #e08850 80%, #2c2e3c 81%); }
```
FILE: main.js
```js
const stepName = document.getElementById('stepname');
stepName.focus();
stepName.select();
```
